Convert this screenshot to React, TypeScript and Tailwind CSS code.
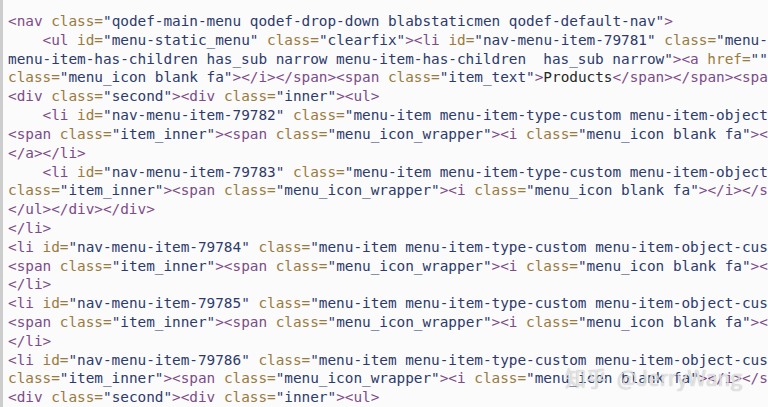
import React from "react";

type Mode = "text" | "tag" | "value";

const LINES: { start: Mode; src: string }[] = [
  { start: "text", src: '<nav class="qodef-main-menu qodef-drop-down blabstaticmen qodef-default-nav">' },
  { start: "text", src: '    <ul id="menu-static_menu" class="clearfix"><li id="nav-menu-item-79781" class="menu-item menu-item-type-custom menu-item-object-custom' },
  { start: "value", src: 'menu-item-has-children has_sub narrow menu-item-has-children  has_sub narrow"><a href="" class=""><span class="item_outer">' },
  { start: "tag", src: 'class="menu_icon blank fa"></i></span><span class="item_text">Products</span></span><span class="plus"></span></a>' },
  { start: "text", src: '<div class="second"><div class="inner"><ul>' },
  { start: "text", src: '    <li id="nav-menu-item-79782" class="menu-item menu-item-type-custom menu-item-object-custom anchor-item"><a href="">' },
  { start: "text", src: '<span class="item_inner"><span class="menu_icon_wrapper"><i class="menu_icon blank fa"></i></span></span>' },
  { start: "text", src: "</a></li>" },
  { start: "text", src: '    <li id="nav-menu-item-79783" class="menu-item menu-item-type-custom menu-item-object-custom anchor-item"><a href="" ' },
  { start: "tag", src: 'class="item_inner"><span class="menu_icon_wrapper"><i class="menu_icon blank fa"></i></span></span></a></li>' },
  { start: "text", src: "</ul></div></div>" },
  { start: "text", src: "</li>" },
  { start: "text", src: '<li id="nav-menu-item-79784" class="menu-item menu-item-type-custom menu-item-object-custom narrow"><a href="">' },
  { start: "text", src: '<span class="item_inner"><span class="menu_icon_wrapper"><i class="menu_icon blank fa"></i></span></span>' },
  { start: "text", src: "</li>" },
  { start: "text", src: '<li id="nav-menu-item-79785" class="menu-item menu-item-type-custom menu-item-object-custom narrow"><a href="">' },
  { start: "text", src: '<span class="item_inner"><span class="menu_icon_wrapper"><i class="menu_icon blank fa"></i></span></span>' },
  { start: "text", src: "</li>" },
  { start: "text", src: '<li id="nav-menu-item-79786" class="menu-item menu-item-type-custom menu-item-object-custom narrow"><a href="" ' },
  { start: "tag", src: 'class="item_inner"><span class="menu_icon_wrapper"><i class="menu_icon blank fa"></i></span></span></a>' },
  { start: "text", src: '<div class="second"><div class="inner"><ul>' },
];

const COLORS = {
  tag: "text-[#7d4b8a]",
  attr: "text-[#9a7a3e]",
  value: "text-[#2d3a6c]",
  text: "text-[#262626]",
};

// small html highlighter, good enough for these lines
function highlight(src: string, start: Mode) {
  const out: { cls: string; s: string }[] = [];
  const push = (cls: string, s: string) => {
    if (!s) return;
    const last = out[out.length - 1];
    if (last && last.cls === cls) last.s += s;
    else out.push({ cls, s });
  };
  let mode: Mode = start;
  let i = 0;
  while (i < src.length) {
    const c = src[i];
    if (mode === "value") {
      const end = src.indexOf('"', i);
      if (end === -1) {
        push(COLORS.value, src.slice(i));
        break;
      }
      push(COLORS.value, src.slice(i, end + 1));
      i = end + 1;
      mode = "tag";
    } else if (mode === "text") {
      if (c === "<") {
        let j = i + 1;
        while (j < src.length && /[a-z\/0-9]/i.test(src[j])) j++;
        push(COLORS.tag, src.slice(i, j));
        i = j;
        mode = "tag";
      } else {
        push(COLORS.text, c);
        i++;
      }
    } else {
      if (c === ">") {
        push(COLORS.tag, c);
        i++;
        mode = "text";
      } else if (c === '"') {
        push(COLORS.value, c);
        i++;
        mode = "value";
      } else if (c === " ") {
        push(COLORS.text, c);
        i++;
      } else {
        push(COLORS.attr, c);
        i++;
      }
    }
  }
  return out;
}

export default function App() {
  return (
    <div className="relative w-[768px] h-[407px] overflow-hidden bg-[#fbfbfb] border-l-[3px] border-[#cdcdcd]">
      <div className="pl-[5px] pt-[12px] font-['DejaVu_Sans_Mono',monospace] text-[14.4px] tracking-[-0.03px] leading-[18.82px]">
        {LINES.map((line, idx) => (
          <div key={idx} className="whitespace-pre overflow-hidden">
            {highlight(line.src, line.start).map((t, k) => (
              <span key={k} className={t.cls}>
                {t.s}
              </span>
            ))}
          </div>
        ))}
      </div>
      <div className="absolute left-[562px] top-[362px] flex items-center gap-[10px] text-[21px] text-white/70 font-['Noto_Sans_CJK_SC','Noto_Sans',sans-serif] [text-shadow:0_0_1px_rgba(90,90,90,0.6)]">
        <span>知乎</span>
        <span>@JerryWang</span>
      </div>
    </div>
  );
}
